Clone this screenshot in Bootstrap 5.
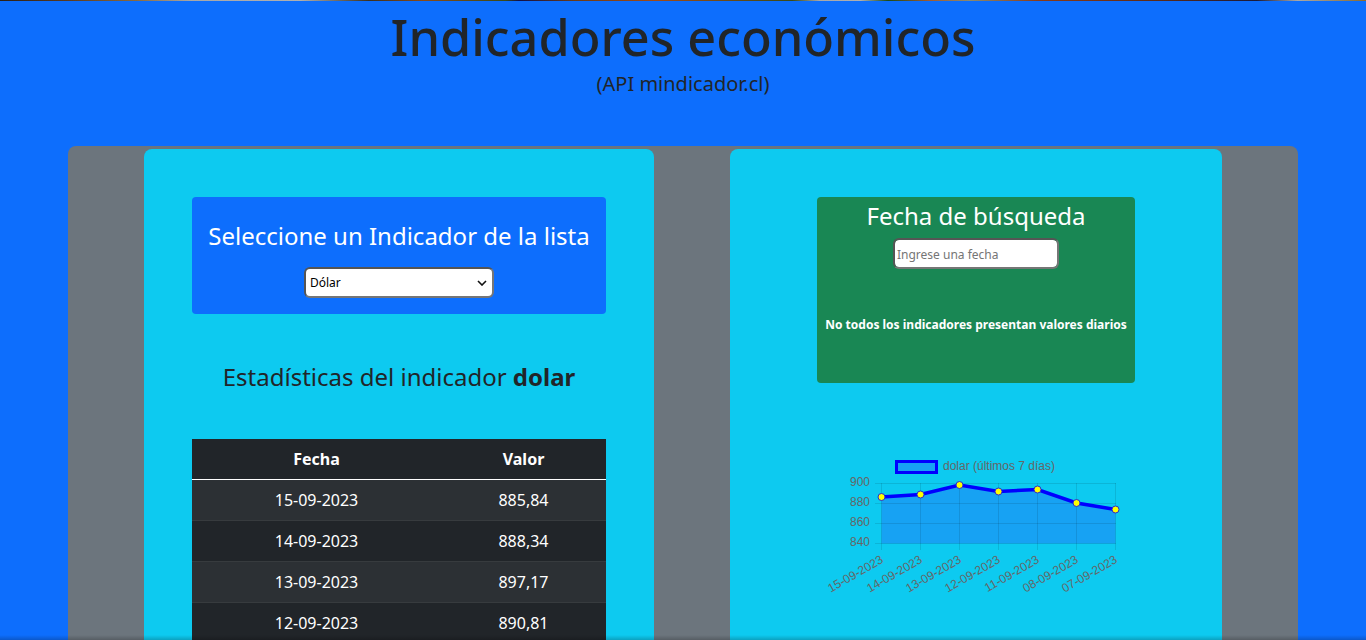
<!DOCTYPE html>
<html lang="es">

<head>
    <meta charset="UTF-8">
    <title>Indicadores económicos</title>
    <link href="https://cdn.jsdelivr.net/npm/bootstrap@5.3.0/dist/css/bootstrap.min.css" rel="stylesheet">
    <style>
        body {
            font-family: "Noto Sans", sans-serif;
        }

        .top-strip {
            height: 1px;
            background: linear-gradient(90deg, #2a2018 0%, #5a3a20 5%, #8a6a40 10%, #a8a8a8 14%, #b0b0b0 22%, #3a3020 27%, #8a4a18 31%, #3a4a18 37%, #10104a 38%, #6a3a18 42%, #a04a18 48%, #3a4a18 58%, #a8a8a8 60%, #b0b0b0 63%, #1a4a1a 65%, #a05a30 68%, #8a8a70 71%, #8a3a18 76%, #5a2a18 85%, #1a1a3a 92%, #a8a8a8 95%, #8a6a30 100%);
        }

        .page-title {
            font-size: 50.4px;
            line-height: 60px;
            margin-top: 6px;
            margin-bottom: 5px;
        }

        .page-sub {
            font-size: 20px;
            line-height: 24px;
        }

        .panel-wrap {
            width: 1230px;
            margin-top: 50px;
            padding-top: 3px;
            height: 600px;
        }

        .panel-left {
            width: 510px;
        }

        .panel-right {
            width: 492px;
        }

        .select-box {
            padding: 24px 16px 16px;
        }

        .select-box h3,
        .date-box h3,
        .stats-title {
            font-size: 24px;
            line-height: 29px;
        }

        .select-box h3 {
            margin-bottom: 17px;
        }

        .ind-select {
            width: 190px;
            height: 31px;
            font-size: 12px;
            line-height: 16px;
            padding: 0 24px 0 4px;
            border: 2px solid;
            border-color: #555 #767676 #767676 #555;
            background-image: url("data:image/svg+xml,%3csvg xmlns='http://www.w3.org/2000/svg' viewBox='0 0 10 6'%3e%3cpath fill='none' stroke='%23111' stroke-width='1.6' d='M1 1l4 4 4-4'/%3e%3c/svg%3e");
            background-position: right 5px center;
            background-size: 10px 6px;
            color: #000;
        }

        .stats-title {
            margin-top: 48px;
            margin-bottom: 48px;
        }

        .dollar-table {
            width: 414px;
        }

        .dollar-table th:first-child,
        .dollar-table td:first-child {
            width: 249px;
        }

        .dollar-table thead th {
            border-bottom-color: #fff;
        }

        .date-box {
            width: 318px;
            height: 186px;
            padding-top: 4px;
        }

        .date-box h3 {
            margin-bottom: 8px;
        }

        .date-input {
            width: 166px;
            height: 31px;
            font-size: 12px;
            padding: 2px 2px 0;
            border: 2px solid;
            border-color: #555 #767676 #767676 #555;
        }

        .date-input::placeholder {
            color: #757575;
        }

        .date-note {
            font-size: 12px;
            line-height: 16px;
            margin-top: 48px;
        }

        .chart-svg {
            width: 318px;
            height: 160px;
            margin-top: 67px;
        }

        .chart-svg text {
            font-family: "Liberation Sans", sans-serif;
            font-size: 12px;
            fill: #666;
        }

        .bottom-fade {
            height: 5px;
            background: linear-gradient(rgba(0, 0, 0, 0), rgba(0, 0, 0, .2));
            pointer-events: none;
        }
    </style>
    <script src="https://cdn.jsdelivr.net/npm/bootstrap@5.3.0/dist/js/bootstrap.bundle.min.js"></script>
</head>

<body class="bg-primary vh-100 overflow-hidden position-relative">

    <div class="top-strip"></div>

    <header class="text-center">
        <h1 class="page-title">Indicadores económicos</h1>
        <p class="page-sub mb-0">(API mindicador.cl)</p>
    </header>

    <main class="panel-wrap bg-secondary rounded-3 mx-auto d-flex justify-content-evenly align-items-start">

        <section class="panel-left bg-info rounded-3 p-5 h-100">
            <div class="select-box bg-primary rounded-1 text-center text-white">
                <h3 class="fw-normal">Seleccione un Indicador de la lista</h3>
                <select class="form-select ind-select mx-auto">
                    <option>Dólar</option>
                </select>
            </div>

            <h4 class="stats-title fw-normal text-center">Estadísticas del indicador <b>dolar</b></h4>

            <table class="table table-dark table-striped text-center dollar-table">
                <thead>
                    <tr>
                        <th>Fecha</th>
                        <th>Valor</th>
                    </tr>
                </thead>
                <tbody>
                    <tr>
                        <td>15-09-2023</td>
                        <td>885,84</td>
                    </tr>
                    <tr>
                        <td>14-09-2023</td>
                        <td>888,34</td>
                    </tr>
                    <tr>
                        <td>13-09-2023</td>
                        <td>897,17</td>
                    </tr>
                    <tr>
                        <td>12-09-2023</td>
                        <td>890,81</td>
                    </tr>
                </tbody>
            </table>
        </section>

        <section class="panel-right bg-info rounded-3 py-5 h-100 d-flex flex-column align-items-center">
            <div class="date-box bg-success rounded-1 text-center text-white">
                <h3 class="fw-normal">Fecha de búsqueda</h3>
                <input type="text" class="form-control date-input mx-auto" placeholder="Ingrese una fecha">
                <p class="date-note fw-bold mb-0">No todos los indicadores presentan valores diarios</p>
            </div>

            <svg class="chart-svg" viewBox="817 450 318 160">
                <rect x="896.5" y="461.5" width="40" height="11" fill="#17a2f3" stroke="#0000ff" stroke-width="3" />
                <text x="943" y="470">dolar (últimos 7 días)</text>

                <polygon points="881.5,497 920.5,494.5 959.5,485 998.5,491.5 1037.5,489.5 1076.5,503 1115.5,509.5 1115.5,543.5 881.5,543.5" fill="#17a2f3" />

                <g stroke="#000" stroke-opacity=".1" stroke-width="1">
                    <path d="M881.5 483V550M920.5 483V550M959.5 483V550M998.5 483V550M1037.5 483V550M1076.5 483V550M1115.5 483V550" />
                    <path d="M875 483.5H1116M875 503.5H1116M875 523.5H1116M875 543.5H1116" />
                </g>

                <text x="870" y="486" text-anchor="end">900</text>
                <text x="870" y="506" text-anchor="end">880</text>
                <text x="870" y="526" text-anchor="end">860</text>
                <text x="870" y="546" text-anchor="end">840</text>

                <polyline points="881.5,497 920.5,494.5 959.5,485 998.5,491.5 1037.5,489.5 1076.5,503 1115.5,509.5" fill="none" stroke="#0000ff" stroke-width="3.5" />

                <g fill="#ffff00" stroke="#2a2ad0" stroke-width="1">
                    <circle cx="881.5" cy="497" r="3.5" />
                    <circle cx="920.5" cy="494.5" r="3.5" />
                    <circle cx="959.5" cy="485" r="3.5" />
                    <circle cx="998.5" cy="491.5" r="3.5" />
                    <circle cx="1037.5" cy="489.5" r="3.5" />
                    <circle cx="1076.5" cy="503" r="3.5" />
                    <circle cx="1115.5" cy="509.5" r="3.5" />
                </g>

                <g text-anchor="end">
                    <text transform="translate(884 562) rotate(-30)">15-09-2023</text>
                    <text transform="translate(923 562) rotate(-30)">14-09-2023</text>
                    <text transform="translate(962 562) rotate(-30)">13-09-2023</text>
                    <text transform="translate(1001 562) rotate(-30)">12-09-2023</text>
                    <text transform="translate(1040 562) rotate(-30)">11-09-2023</text>
                    <text transform="translate(1079 562) rotate(-30)">08-09-2023</text>
                    <text transform="translate(1118 562) rotate(-30)">07-09-2023</text>
                </g>
            </svg>
        </section>

    </main>

    <div class="bottom-fade position-absolute bottom-0 start-0 end-0"></div>

</body>

</html>
